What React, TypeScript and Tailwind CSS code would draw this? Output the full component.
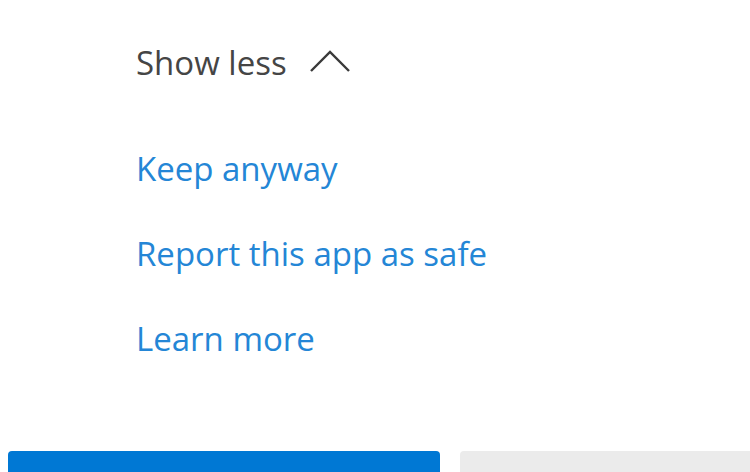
const links = ["Keep anyway", "Report this app as safe", "Learn more"];

const ChevronUp = () => (
  <svg width="42" height="24" viewBox="0 0 42 24" fill="none" className="ml-[22px]">
    <path d="M2 21 L21 2 L40 21" stroke="#3a3a3a" strokeWidth="2.4" />
  </svg>
);

export default function App() {
  return (
    <div className="w-[750px] h-[472px] bg-white overflow-hidden flex flex-col" style={{ fontFamily: '"Open Sans", "Noto Sans", sans-serif' }}>
      <div className="pl-[136px] pt-[38px] flex flex-col">
        <button className="flex items-center h-[48px] text-[33px] text-[#454545] leading-none">
          <span>Show less</span>
          <ChevronUp />
        </button>
        <div className="flex flex-col mt-[58px] gap-[37px]">
          {links.map((l) => (
            <a key={l} href="#" className="h-[48px] flex items-center text-[33px] leading-none text-[#2486d6]">
              {l}
            </a>
          ))}
        </div>
      </div>
      <div className="flex gap-[20px] pl-[8px] mt-auto">
        <button className="w-[432px] h-[21px] bg-[#0078d4] rounded-t-[4px]" />
        <button className="flex-1 h-[21px] bg-[#ebebeb] rounded-tl-[4px]" />
      </div>
    </div>
  );
}
